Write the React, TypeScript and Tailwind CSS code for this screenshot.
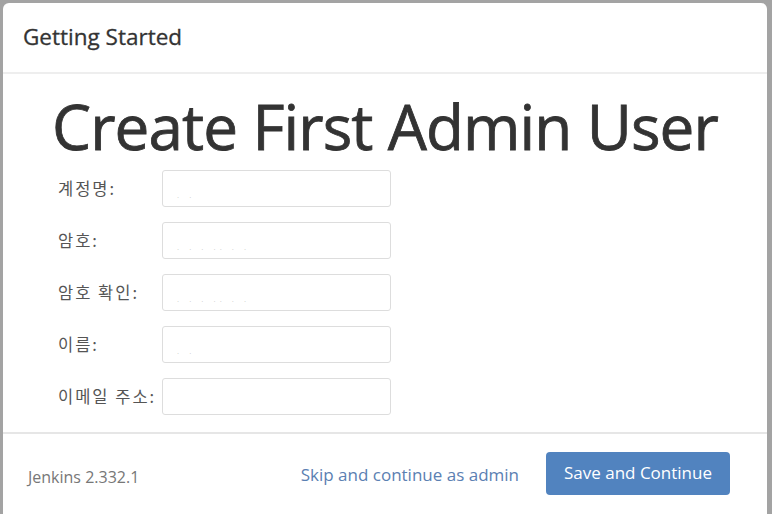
import React from "react";

const fields = [
  { label: "계정명:", dots: "· ·" },
  { label: "암호:", dots: "· · · ·· · ·" },
  { label: "암호 확인:", dots: "· · · ·· · ·" },
  { label: "이름:", dots: "· ·" },
  { label: "이메일 주소:", dots: "" },
];

export default function App() {
  return (
    <div
      className="w-[772px] h-[514px] bg-[#a3a3a3] pl-[3px] pt-[3px] pr-[5px] overflow-hidden"
      style={{ fontFamily: '"Open Sans", "Noto Sans CJK KR", sans-serif' }}
    >
      <div className="bg-white rounded-t-[6px] h-[520px] flex flex-col">
        <div className="h-[71px] shrink-0 flex items-center pl-[20px] border-b-2 border-[#eeeeee]">
          <span className="text-[22.5px] text-[#333333] mt-[-2px] [-webkit-text-stroke:0.3px_#333333]">Getting Started</span>
        </div>
        <div className="h-[358px] shrink-0 flex flex-col">
          <h1 className="text-[62px] leading-none text-[#333333] text-center mt-[21px] tracking-[-0.9px] [-webkit-text-stroke:0.8px_#333333]">
            Create First Admin User
          </h1>
          <div className="flex flex-col gap-[16px] mt-[13px] pl-[55px]">
            {fields.map((f) => (
              <div key={f.label} className="flex items-center h-[36px]">
                <div
                  className="w-[104px] text-[16.5px] tracking-[2px] text-[#555555]"
                  style={{ fontFamily: '"Noto Sans CJK KR", sans-serif' }}
                >
                  {f.label}
                </div>
                <div className="w-[229px] h-[37px] border border-[#dddddd] rounded-[3px] flex items-end pl-[14px] pb-[5px]">
                  <span className="text-[8px] leading-none tracking-[4px] text-[#c8c8c8]">{f.dots}</span>
                </div>
              </div>
            ))}
          </div>
        </div>
        <div className="border-t-2 border-[#e6e6e6] h-[80px] shrink-0 flex items-center pl-[25px] pr-[37px]">
          <span className="text-[16px] text-[#777777] mt-[8px]">Jenkins 2.332.1</span>
          <div className="ml-auto flex items-center gap-[27px]">
            <span className="text-[17px] text-[#5b80b2] mt-[3px]">Skip and continue as admin</span>
            <button className="w-[184px] h-[43px] rounded-[4px] bg-[#5183bf] text-white text-[17px]">
              Save and Continue
            </button>
          </div>
        </div>
      </div>
    </div>
  );
}
